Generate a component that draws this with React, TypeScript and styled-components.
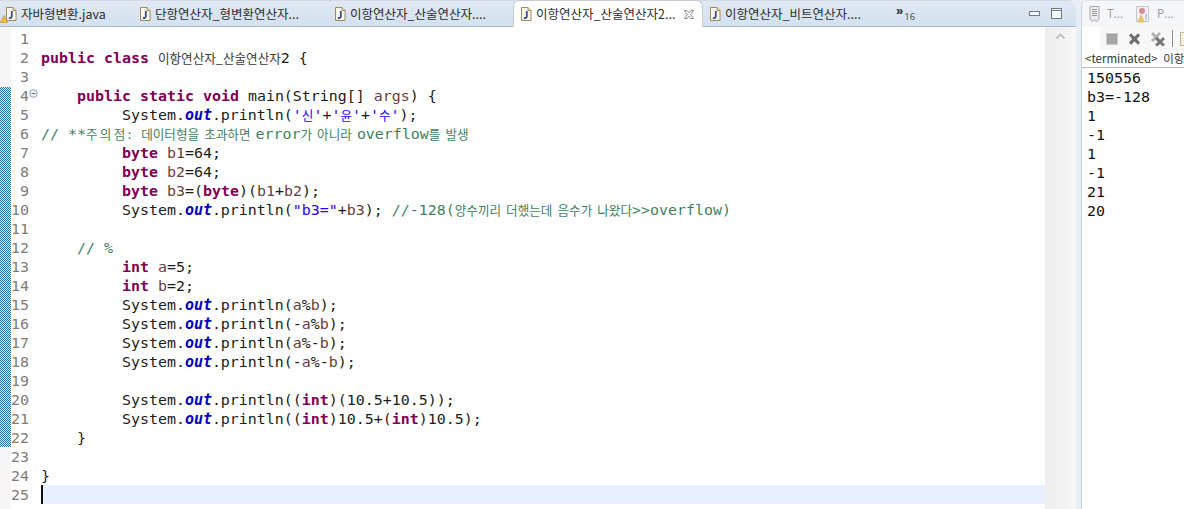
import React from "react";
import styled, { createGlobalStyle } from "styled-components";

const Global = createGlobalStyle`
  html, body { margin: 0; padding: 0; background: #fff; overflow: hidden; }
  #root { width: 1184px; height: 509px; }
`;

const MONO = `"DejaVu Sans Mono", "Noto Sans CJK KR", monospace`;
const UI = `"Noto Sans CJK KR", "Open Sans", sans-serif`;

const Page = styled.div`
  width: 1184px; height: 509px; display: flex; background: #e9eef4; overflow: hidden;
`;
const EditorPane = styled.section`
  width: 1076px; height: 509px; display: flex; flex-direction: column; background: #fff;
  border-top-right-radius: 8px; overflow: hidden; flex: none;
`;
const TabBar = styled.div`
  flex: none; display: flex; align-items: stretch;
  background: linear-gradient(#e0e9f3, #d3e1ef);
  border-top: 1px solid #d4dae2; border-bottom: 1px solid #a8b9ca; box-sizing: border-box; height: 27px;
`;
const Tab = styled.div<{ $w: number; $active?: boolean; $pad: number }>`
  width: ${p => p.$w}px; flex: none; box-sizing: border-box; padding-left: ${p => p.$pad}px;
  display: flex; align-items: center; gap: 4px; position: relative;
  font: 12.5px/16px ${UI}; color: #2d2d2d; white-space: nowrap;
  ${p => p.$active ? `
    background: #fff; border: 1px solid #c4ccd6; border-bottom: 1px solid #fff;
    border-radius: 6px 6px 0 0; margin: -1px 0 -1px; height: 27px;
  ` : ""}
`;
const IconWrap = styled.span`
  position: relative; width: 12px; height: 14px; flex: none; display: inline-flex;
`;
const WarnBadge = styled.svg`
  position: absolute; left: -5px; bottom: -2px;
`;
const CloseBtn = styled.svg`
  position: absolute; right: 7px; top: 8px;
`;
const Overflow = styled.div`
  width: 133px; flex: none; display: flex; align-items: flex-start; padding-top: 3px; box-sizing: border-box;
  font: bold 13px/13px "Liberation Sans", sans-serif; color: #222;
`;
const OverflowCount = styled.span`
  font: 9.5px/10px "Open Sans", sans-serif; margin-top: 8px; color: #444; margin-left: 1px;
`;
const WinButtons = styled.div`
  display: flex; align-items: center; gap: 11px;
`;
const EditorBody = styled.div`
  flex: 1; display: flex; min-height: 0;
`;
const Markers = styled.div`
  width: 11px; flex: none; background: #f6f6f6; padding-top: 60px;
`;
const Hatch = styled.div`
  height: 360px;
  background: repeating-conic-gradient(#1e6fa8 0 25%, #dcecf5 0 50%) 0 0 / 2px 2px;
`;
const Code = styled.div`
  flex: 1; padding-top: 2px; min-width: 0;
`;
const Row = styled.div`
  display: flex; height: 19px; font: 14.95px/21px ${MONO}; color: #1c1c1c; white-space: pre;
`;
const LineNo = styled.div`
  width: 18px; flex: none; text-align: right; color: #7c7c7c; position: relative;
`;
const Fold = styled.svg`
  position: absolute; left: 18px; top: 3px;
`;
const LineText = styled.div<{ $current?: boolean }>`
  flex: 1; margin-left: 12px; height: 19px;
  ${p => p.$current ? `background: #e8f2fe; box-shadow: inset 2px 0 0 #111;` : ""}
`;
const Tok = styled.span<{ $k: string }>`
  ${p => p.$k === "kw" ? "color:#7f0055;font-weight:bold;" : ""}
  ${p => p.$k === "fld" ? "color:#0000c0;font-weight:bold;font-style:italic;" : ""}
  ${p => p.$k === "str" ? "color:#2a00ff;" : ""}
  ${p => p.$k === "var" ? "color:#6a3e3e;" : ""}
  ${p => p.$k === "cm" ? "color:#3f7f5f;" : ""}
  ${p => p.$k === "ko" ? `font: 12.6px/19px ${UI}; color:#3a3a3a;` : ""}
  ${p => p.$k === "cko" ? `font: 12.6px/19px ${UI}; color:#3f7f5f; word-spacing: 2.2px;` : ""}
  ${p => p.$k === "ckow" ? `font: 12.6px/19px ${UI}; color:#3f7f5f; letter-spacing: 2.300px;` : ""}
  ${p => p.$k === "sko" ? `font: 12.6px/19px ${UI}; color:#2a00ff;` : ""}
`;
const Scroll = styled.div`
  width: 31px; flex: none; background: linear-gradient(90deg, #efefef, #f2f2f2 60%, #f7f7f7);
  display: flex; justify-content: center; align-items: flex-start; padding-top: 6px; box-sizing: border-box;
`;
const Sash = styled.div`
  width: 5px; flex: none; background: #e9eef4;
`;
const ConsolePane = styled.section`
  flex: 1; min-width: 0; background: #fff; border-left: 1px solid #c9d3df; border-top-left-radius: 7px;
  display: flex; flex-direction: column; overflow: hidden;
`;
const ConsoleTabs = styled.div`
  height: 27px; flex: none; display: flex; align-items: center; padding-left: 7px; gap: 12px;
  background: #f5f6f9; border-top: 1px solid #dde2e8; box-sizing: border-box;
`;
const ConsoleTab = styled.div`
  display: flex; align-items: center; gap: 7px; font: 12px/14px "Open Sans", sans-serif; color: #9a9a9a;
`;
const ConsoleTools = styled.div`
  height: 23px; flex: none; display: flex; padding-left: 18px; background: #fff;
`;
const ToolGroup = styled.div`
  flex: 1; display: flex; align-items: center; padding-left: 6px; background: #f8f8f9; gap: 8px;
`;
const StopIcon = styled.svg`
  margin-right: 1px;
`;
const ToolSep = styled.span`
  width: 1px; height: 17px; background: #8f8f8f; margin: 0 -1px 0 -2px;
`;
const ConsoleHead = styled.div`
  height: 17px; flex: none; padding-left: 3px; white-space: nowrap;
  font: 11.5px/16px ${UI}; color: #333; border-bottom: 1px solid #b8b8b8; word-spacing: 3px;
`;
const ConsoleOut = styled.pre`
  margin: 0; padding: 1px 0 0 5px; font: 14.95px/19px ${MONO}; color: #111;
`;

const JFile = () => (
  <svg width="12" height="14" viewBox="0 0 12 14">
    <path d="M1.5.5H8L11 3.5V13.5H1.5Z" fill="#fbf8ea" stroke="#9c8a5c" />
    <path d="M8 .5V3.5H11" fill="#efe6c8" stroke="#9c8a5c" />
    <path d="M6.8 4V9.5C6.8 11 5.4 11.400 4 10.600" fill="none" stroke="#36528f" strokeWidth="1.800" />
  </svg>
);

type T = [string, string];
const n = (s: string): T => ["", s];
const kw = (s: string): T => ["kw", s];
const v = (s: string): T => ["var", s];
const sysout = (...rest: T[]): T[] => [n("         System."), ["fld", "out"], n(".println("), ...rest];

const LINES: T[][] = [
  [],
  [kw("public"), n(" "), kw("class"), n(" "), ["ko", "이항연산자_산술연산자"], n("2 {")],
  [],
  [n("    "), kw("public"), n(" "), kw("static"), n(" "), kw("void"), n(" main(String[] "), v("args"), n(") {")],
  sysout(["str", "'"], ["sko", "신"], ["str", "'"], n("+"), ["str", "'"], ["sko", "윤"], ["str", "'"], n("+"), ["str", "'"], ["sko", "수"], ["str", "'"], n(");")),
  [["cm", "// **"], ["ckow", "주의점"], ["cko", ":  데이터형을 초과하면 "], ["cm", "error"], ["cko", "가 아니라 "], ["cm", "overflow"], ["cko", "를 발생"]],
  [n("         "), kw("byte"), n(" "), v("b1"), n("=64;")],
  [n("         "), kw("byte"), n(" "), v("b2"), n("=64;")],
  [n("         "), kw("byte"), n(" "), v("b3"), n("=("), kw("byte"), n(")("), v("b1"), n("+"), v("b2"), n(");")],
  sysout(["str", '"b3="'], n("+"), v("b3"), n("); "), ["cm", "//-128("], ["cko", "양수끼리 더했는데 음수가 나왔다"], ["cm", ">>overflow)"]),
  [],
  [n("    "), ["cm", "// %"]],
  [n("         "), kw("int"), n(" "), v("a"), n("=5;")],
  [n("         "), kw("int"), n(" "), v("b"), n("=2;")],
  sysout(v("a"), n("%"), v("b"), n(");")),
  sysout(n("-"), v("a"), n("%"), v("b"), n(");")),
  sysout(v("a"), n("%-"), v("b"), n(");")),
  sysout(n("-"), v("a"), n("%-"), v("b"), n(");")),
  [],
  sysout(n("("), kw("int"), n(")(10.5+10.5));")),
  sysout(n("("), kw("int"), n(")10.5+("), kw("int"), n(")10.5);")),
  [n("    }")],
  [],
  [n("}")],
  [],
];

const TABS = [
  { w: 133, pad: 5, label: "자바형변환.java", warn: true },
  { w: 195, pad: 6, label: "단항연산자_형변환연산자..." },
  { w: 185, pad: 6, label: "이항연산자_산술연산자...." },
  { w: 190, pad: 6, label: "이항연산자_산술연산자2...", active: true },
  { w: 193, pad: 6, label: "이항연산자_비트연산자...." },
];

const OUTPUT = "150556\nb3=-128\n1\n-1\n1\n-1\n21\n20";

export default function App() {
  return (
    <Page>
      <Global />
      <EditorPane>
        <TabBar>
          {TABS.map(t => (
            <Tab key={t.label} $w={t.w} $pad={t.pad} $active={t.active}>
              <IconWrap>
                <JFile />
                {t.warn && (
                  <WarnBadge width="8" height="8" viewBox="0 0 8 8">
                    <path d="M4 .5L7.700 7.500H.3Z" fill="#f3c244" stroke="#b5842a" strokeWidth=".6" />
                  </WarnBadge>
                )}
              </IconWrap>
              {t.label}
              {t.active && (
                <CloseBtn width="12" height="11" viewBox="0 0 12 11">
                  <path d="M1.500 1.500L4 1.500L6 3.800L8 1.500L10.500 1.500L7.600 5.500L10.500 9.500L8 9.500L6 7.200L4 9.500L1.500 9.500L4.400 5.500Z" fill="#fff" stroke="#8a8a8a" />
                </CloseBtn>
              )}
            </Tab>
          ))}
          <Overflow>»<OverflowCount>16</OverflowCount></Overflow>
          <WinButtons>
            <svg width="11" height="6" viewBox="0 0 11 6"><rect x=".5" y=".5" width="10" height="4" fill="#f6f8fb" stroke="#6f7a86" /></svg>
            <svg width="11" height="11" viewBox="0 0 11 11"><rect x=".5" y=".5" width="10" height="10" fill="#f6f8fb" stroke="#6f7a86" /><path d="M0 2.500H11" stroke="#6f7a86" /></svg>
          </WinButtons>
        </TabBar>
        <EditorBody>
          <Markers><Hatch /></Markers>
          <Code>
            {LINES.map((toks, i) => (
              <Row key={i}>
                <LineNo>
                  {i + 1}
                  {i === 3 && (
                    <Fold width="9" height="9" viewBox="0 0 9 9">
                      <circle cx="4.500" cy="4.500" r="3.800" fill="#eef1f6" stroke="#8d9bb0" />
                      <path d="M2.500 4.500H6.500" stroke="#5d6f8c" />
                    </Fold>
                  )}
                </LineNo>
                <LineText $current={i === 24}>
                  {toks.map((t, j) => <Tok key={j} $k={t[0]}>{t[1]}</Tok>)}
                </LineText>
              </Row>
            ))}
          </Code>
          <Scroll>
            <svg width="11" height="7" viewBox="0 0 11 7"><path d="M1.500 5.500L5.500 1.500L9.500 5.500" fill="none" stroke="#c2c2c2" strokeWidth="2" /></svg>
          </Scroll>
        </EditorBody>
      </EditorPane>
      <Sash />
      <ConsolePane>
        <ConsoleTabs>
          <ConsoleTab>
            <svg width="11" height="16" viewBox="0 0 11 16">
              <path d="M1 .5H10V13L8 15.500L5.500 14L3 15.500L1 13Z" fill="#ececec" stroke="#a8a8a8" />
              <path d="M3 3.500H8M3 5.500H8M3 7.500H8M3 9.500H8" stroke="#9a9a9a" />
            </svg>
            T...
          </ConsoleTab>
          <ConsoleTab>
            <svg width="15" height="17" viewBox="0 0 15 17">
              <path d="M1.500.5H13.500V15.500H1.500Z" fill="#f4f2f4" stroke="#c2c6cf" />
              <circle cx="7" cy="5" r="3" fill="#d98b96" />
              <path d="M6 9L9.500 16H2.500Z" fill="#eec566" stroke="#c9a04a" strokeWidth=".5" />
              <path d="M11 8V14" stroke="#8fa9c8" />
            </svg>
            P...
          </ConsoleTab>
        </ConsoleTabs>
        <ConsoleTools>
          <ToolGroup>
            <StopIcon width="12" height="12" viewBox="0 0 12 12"><rect x=".5" y=".5" width="11" height="11" fill="#a6a6a6" stroke="#c8c8c8" /></StopIcon>
            <svg width="15" height="14" viewBox="0 0 16 14"><path d="M2 3L4.500 1L8 4.500L11.500 1L14 3L10.500 7L14 11L11.500 13L8 9.500L4.500 13L2 11L5.500 7Z" fill="#6e6e6e" /></svg>
            <svg width="16" height="16" viewBox="0 0 16 16">
              <path d="M1 3L3 1L6 4L9 1L11 3L8 6L11 9L9 11L6 8L3 11L1 9L4 6Z" fill="#b0b0b0" />
              <path d="M5 8L7 6L10 9L13 6L15 8L12 11L15 13.500L13 15.500L10 13L7 15.500L5 13.500L8 11Z" fill="#747474" />
            </svg>
            <ToolSep />
            <svg width="12" height="14" viewBox="0 0 12 14"><rect x=".5" y=".5" width="11" height="13" fill="#f3efdc" stroke="#bdb99c" /></svg>
          </ToolGroup>
        </ConsoleTools>
        <ConsoleHead>&lt;terminated&gt; 이항연산자_산술연산자2</ConsoleHead>
        <ConsoleOut>{OUTPUT}</ConsoleOut>
      </ConsolePane>
    </Page>
  );
}
